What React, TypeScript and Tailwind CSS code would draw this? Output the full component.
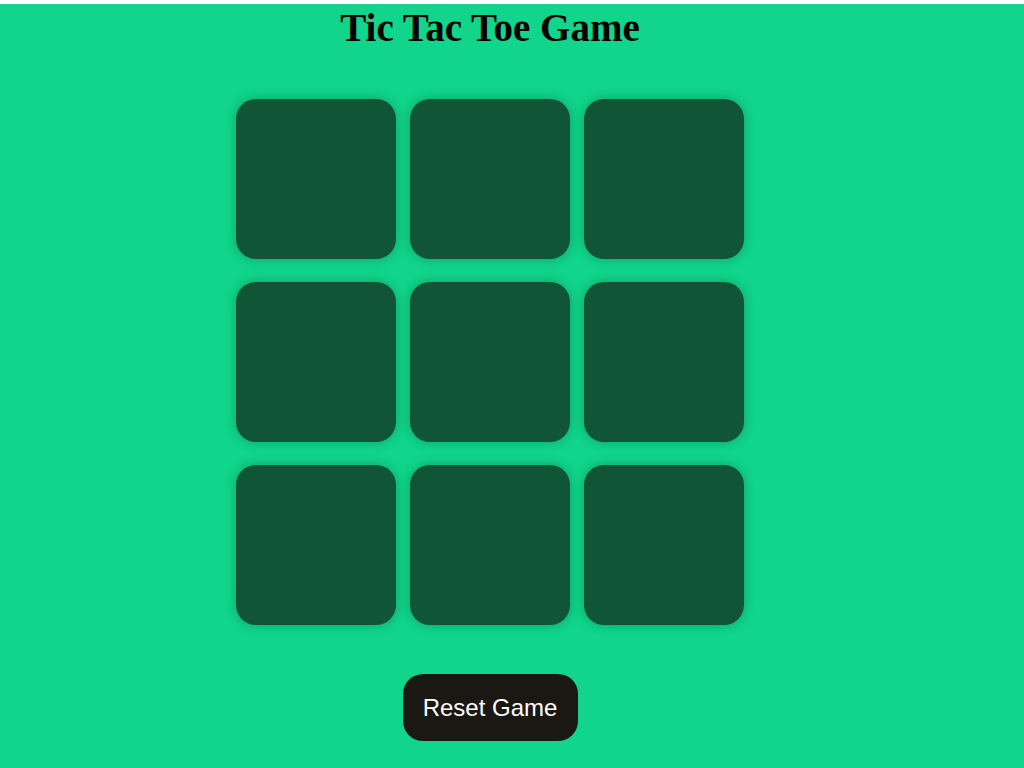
import React, { useState } from 'react'

export default function App() {
  const [board, setBoard] = useState<string[]>(Array(9).fill(''))
  const [turn, setTurn] = useState('X')

  const play = (i: number) => {
    if (board[i]) return
    const next = [...board]
    next[i] = turn
    setBoard(next)
    setTurn(turn === 'X' ? 'O' : 'X')
  }

  return (
    <div className="w-[1024px] h-[768px] bg-white pt-[4px] overflow-hidden">
      <div className="h-[764px] bg-[#10d58a] pr-[44px] flex flex-col items-center">
        <h1 className="text-[39px] leading-[48px] font-bold text-black font-['Liberation_Serif',serif]">
          Tic Tac Toe Game
        </h1>
        <div className="mt-[47px] grid grid-cols-[160px_160px_160px] gap-x-[14px] gap-y-[23px]">
          {board.map((cell, i) => (
            <button
              key={i}
              onClick={() => play(i)}
              className="w-[160px] h-[160px] rounded-[20px] bg-[#115537] shadow-[0_0_12px_rgba(0,0,0,0.25)] text-white text-[64px] font-['Liberation_Sans',sans-serif]"
            >
              {cell}
            </button>
          ))}
        </div>
        <button
          onClick={() => {
            setBoard(Array(9).fill(''))
            setTurn('X')
          }}
          className="mt-[49px] w-[175px] h-[67px] rounded-[20px] bg-[#1a1813] text-white text-[24px] font-['Liberation_Sans',Arial,sans-serif]"
        >
          Reset Game
        </button>
      </div>
    </div>
  )
}
